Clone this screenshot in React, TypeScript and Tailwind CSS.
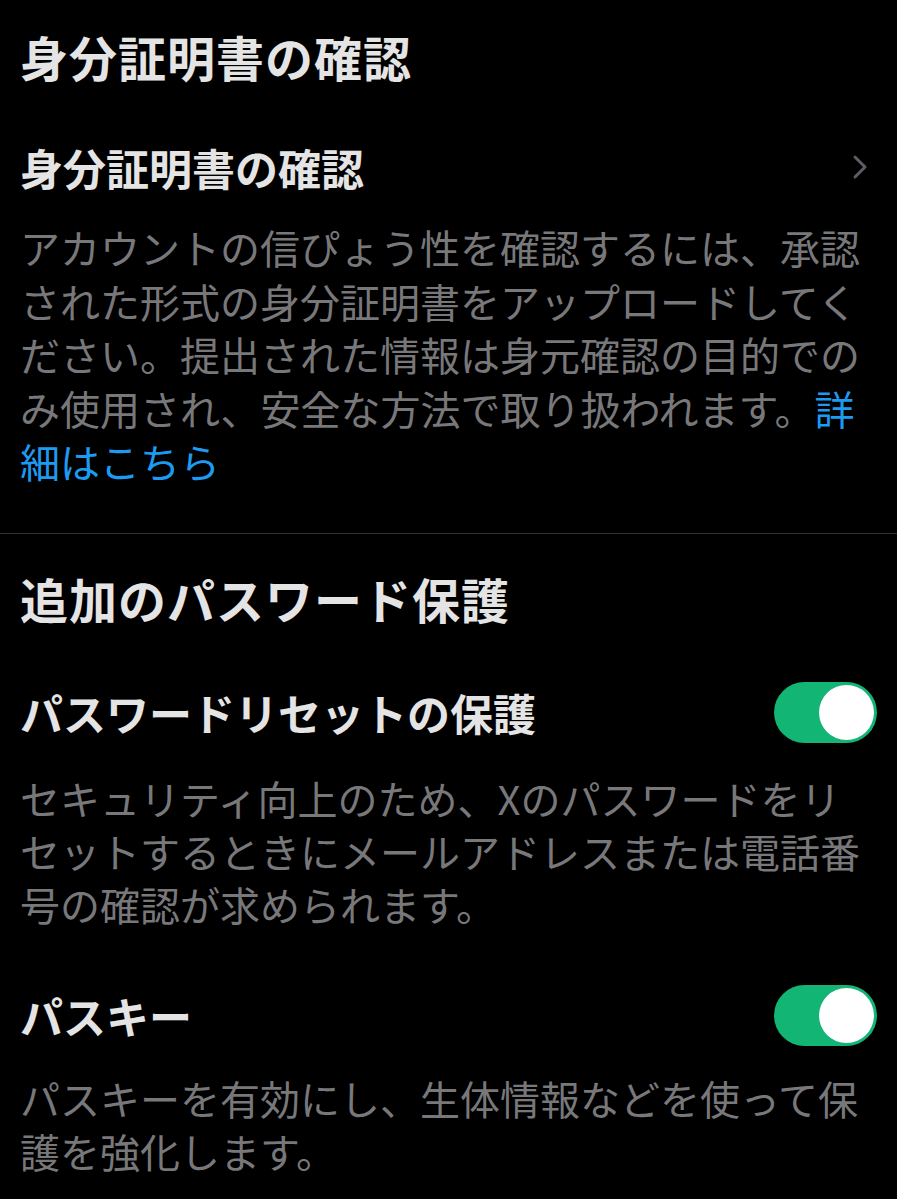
import React from 'react';

const font = { fontFamily: '"Noto Sans CJK JP", "Noto Sans", sans-serif' };

const Toggle: React.FC<{ on: boolean }> = ({ on }) => (
  <div
    className={`flex h-[61px] w-[103px] shrink-0 items-center rounded-full px-[3px] ${
      on ? 'justify-end bg-[#12b573]' : 'justify-start bg-[#3a3a3c]'
    }`}
  >
    <div className="h-[55px] w-[55px] rounded-full bg-white" />
  </div>
);

const Chevron: React.FC = () => (
  <svg width="16" height="26" viewBox="0 0 16 26" fill="none" className="shrink-0">
    <path d="M3 3 L13 13 L3 23" stroke="#5a5d61" strokeWidth="3" strokeLinecap="round" strokeLinejoin="round" />
  </svg>
);

const App: React.FC = () => {
  return (
    <div className="min-h-[1199px] w-full bg-black text-[#e4e4e4]" style={font}>
      <section className="px-5 pt-[26px]">
        <h1 className="text-[48px] font-bold leading-[60px] tracking-[1px]">身分証明書の確認</h1>

        <div className="mt-[51px] flex h-[60px] items-center justify-between">
          <h2 className="text-[43px] font-semibold leading-[60px]">身分証明書の確認</h2>
          <div className="pr-[9px]">
            <Chevron />
          </div>
        </div>

        <p className="mt-[24px] text-[40px] leading-[53.5px] text-[#78787b]">
          アカウントの信ぴょう性を確認するには、承認された形式の身分証明書をアップロードしてください。提出された情報は身元確認の目的でのみ使用され、安全な方法で取り扱われます。
          <span className="text-[#1d9bf0]">詳細はこちら</span>
        </p>
      </section>

      <div className="mt-[44px] h-px w-full bg-[#2f3336]" />

      <section className="px-5 pt-[34px]">
        <h1 className="text-[48px] font-bold leading-[60px] tracking-[1px]">追加のパスワード保護</h1>

        <div className="mt-[54px] flex h-[61px] items-center justify-between">
          <h2 className="text-[43px] font-semibold leading-[61px]">パスワードリセットの保護</h2>
          <Toggle on />
        </div>
        <p className="mt-[29px] text-[40px] leading-[53px] text-[#78787b]">
          セキュリティ向上のため、Xのパスワードをリセットするときにメールアドレスまたは電話番号の確認が求められます。
        </p>

        <div className="mt-[54px] flex h-[61px] items-center justify-between">
          <h2 className="text-[43px] font-semibold leading-[61px]">パスキー</h2>
          <Toggle on />
        </div>
        <p className="mt-[26px] text-[40px] leading-[53px] text-[#78787b]">
          パスキーを有効にし、生体情報などを使って保護を強化します。
        </p>
      </section>
    </div>
  );
};

export default App;
